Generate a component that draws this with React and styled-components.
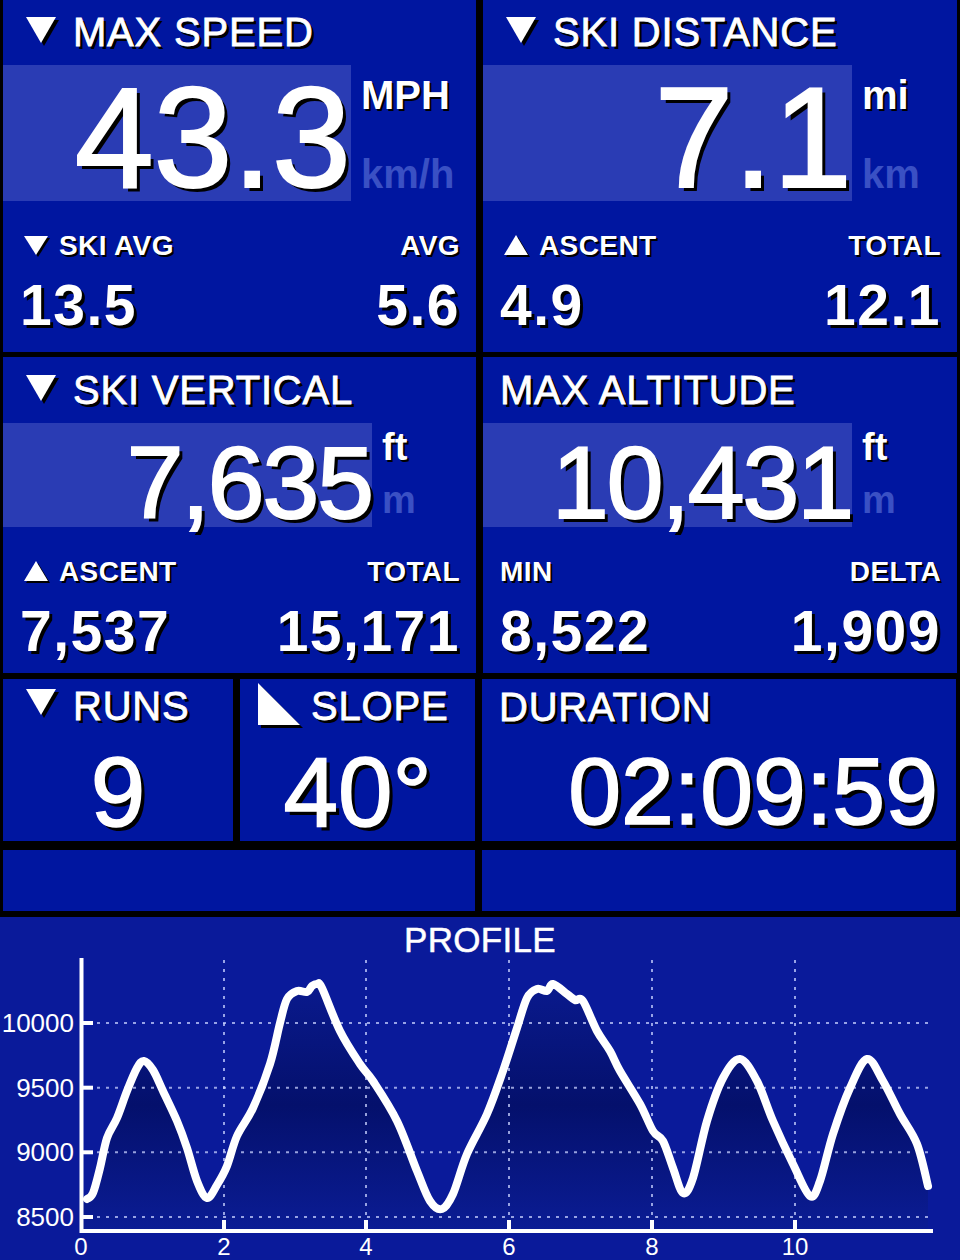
import React from "react";
import styled, { createGlobalStyle } from "styled-components";

const CELL = "#0016a0";
const HILITE = "#2a3cb4";
const DIM = "#3a50c4";
const CHART_BG = "#0a1a9a";

const GlobalStyle = createGlobalStyle`
  html, body {
    margin: 0;
    padding: 0;
    background: #000;
  }
  body {
    font-family: "Liberation Sans", Arial, Helvetica, sans-serif;
    color: #fff;
  }
`;

const Screen = styled.div`
  width: 960px;
  height: 1260px;
  background: #000;
  display: flex;
  flex-direction: column;
  overflow: hidden;
`;

const Row = styled.div`
  display: grid;
  grid-template-columns: ${(p) => p.$cols};
  column-gap: 7px;
  height: ${(p) => p.$h}px;
  margin-top: ${(p) => p.$mt || 0}px;
  padding: 0 3px;
  flex: none;
`;

const Cell = styled.div`
  background: ${CELL};
  display: flex;
  flex-direction: column;
  min-width: 0;
`;

const Title = styled.div`
  display: flex;
  align-items: flex-start;
  gap: ${(p) => p.$gap ?? 17}px;
  margin-top: ${(p) => p.$mt}px;
  padding-left: 17px;
  font-size: 40px;
  line-height: 40px;
  letter-spacing: 0.8px;
  -webkit-text-stroke: 0.8px #fff;
  text-shadow: 3px 3px 0 #000;
  white-space: nowrap;
`;

const Glyph = styled.svg`
  flex: none;
  display: block;
  margin-top: ${(p) => p.$mt || 0}px;
  margin-left: ${(p) => p.$ml || 0}px;
  fill: #fff;
  overflow: visible;
  filter: drop-shadow(${(p) => p.$sh}px ${(p) => p.$sh}px 0 #000);
`;

function Down({ w, h, mt, ml, sh = 3 }) {
  return (
    <Glyph width={w} height={h} viewBox={`0 0 ${w} ${h}`} $mt={mt} $ml={ml} $sh={sh}>
      <polygon points={`0,0 ${w},0 ${w / 2},${h}`} />
    </Glyph>
  );
}

function Up({ w, h, mt, ml, sh = 2 }) {
  return (
    <Glyph width={w} height={h} viewBox={`0 0 ${w} ${h}`} $mt={mt} $ml={ml} $sh={sh}>
      <polygon points={`${w / 2},0 ${w},${h} 0,${h}`} />
    </Glyph>
  );
}

function Slope({ size, mt, ml }) {
  return (
    <Glyph width={size} height={size} viewBox={`0 0 ${size} ${size}`} $mt={mt} $ml={ml} $sh={3}>
      <polygon points={`0,0 ${size},${size} 0,${size}`} />
    </Glyph>
  );
}

const ValueRow = styled.div`
  display: flex;
  height: ${(p) => p.$h}px;
  margin-top: 13px;
  flex: none;
`;

const Hilite = styled.div`
  width: ${(p) => p.$w}px;
  flex: none;
  background: ${HILITE};
  display: flex;
  justify-content: flex-end;
  align-items: flex-start;
`;

const BigNum = styled.span`
  font-size: ${(p) => p.$size}px;
  line-height: 1;
  margin-top: ${(p) => p.$mt}px;
  letter-spacing: ${(p) => p.$ls || 0}px;
  -webkit-text-stroke: 2px #fff;
  text-shadow: 4px 4px 0 #000;
  white-space: nowrap;
`;

const Units = styled.div`
  display: flex;
  flex-direction: column;
  justify-content: space-between;
  padding: ${(p) => p.$pt}px 0 ${(p) => p.$pb}px 10px;
  font-size: ${(p) => p.$size}px;
  line-height: ${(p) => p.$size}px;
  font-weight: 700;
  white-space: nowrap;
`;

const UnitMain = styled.span`
  text-shadow: 2px 2px 0 #000;
`;

const UnitAlt = styled.span`
  color: ${DIM};
`;

const SubLabels = styled.div`
  display: flex;
  justify-content: space-between;
  align-items: flex-start;
  margin-top: 31px;
  padding: 0 16px 0 17px;
  font-size: 28px;
  font-weight: 700;
  line-height: 28px;
  letter-spacing: 0.4px;
  text-shadow: 2px 2px 0 #000;
  white-space: nowrap;
`;

const LabelGroup = styled.span`
  display: flex;
  align-items: flex-start;
  gap: 11px;
`;

const SubValues = styled.div`
  display: flex;
  justify-content: space-between;
  margin-top: 17px;
  padding: 0 16px 0 17px;
  font-size: 57px;
  font-weight: 700;
  line-height: 57px;
  letter-spacing: 1.5px;
  text-shadow: 3px 3px 0 #000;
  white-space: nowrap;
`;

const MidValue = styled.div`
  margin-top: 17px;
  font-size: ${(p) => p.$size}px;
  line-height: 1;
  text-align: ${(p) => p.$align};
  padding-right: ${(p) => p.$pr || 0}px;
  -webkit-text-stroke: 1.6px #fff;
  text-shadow: 4px 4px 0 #000;
  white-space: nowrap;
`;

const ChartPanel = styled.div`
  margin-top: 6px;
  height: 343px;
  flex: none;
  background: ${CHART_BG};
  display: flex;
  flex-direction: column;
  overflow: hidden;
`;

const ChartTitle = styled.div`
  padding-top: 6px;
  font-size: 35px;
  line-height: 34px;
  text-align: center;
  letter-spacing: 0.3px;
  -webkit-text-stroke: 0.5px #fff;
`;

const ChartSvg = styled.svg`
  display: block;
  flex: none;
`;

function StatCell({ title, down = true, value, size, numTop, ls, boxW, boxH, units, unitSize, unitPad, titleTop, left, right }) {
  return (
    <Cell>
      <Title $mt={titleTop}>
        {down && <Down w={30} h={26} mt={5} ml={6} />}
        <span>{title}</span>
      </Title>
      <ValueRow $h={boxH}>
        <Hilite $w={boxW}>
          <BigNum $size={size} $mt={numTop} $ls={ls}>{value}</BigNum>
        </Hilite>
        <Units $size={unitSize} $pt={unitPad[0]} $pb={unitPad[1]}>
          <UnitMain>{units[0]}</UnitMain>
          <UnitAlt>{units[1]}</UnitAlt>
        </Units>
      </ValueRow>
      <SubLabels>
        <LabelGroup>
          {left.icon === "down" && <Down w={24} h={19} mt={4} ml={4} sh={2} />}
          {left.icon === "up" && <Up w={24} h={20} mt={3} ml={4} />}
          <span>{left.label}</span>
        </LabelGroup>
        <span>{right.label}</span>
      </SubLabels>
      <SubValues>
        <span>{left.value}</span>
        <span>{right.value}</span>
      </SubValues>
    </Cell>
  );
}

const PROFILE = [
  [87, 1198], [93, 1192], [100, 1167], [107, 1137], [117, 1117], [127, 1090],
  [137, 1067], [144, 1060], [153, 1069], [163, 1090], [177, 1120], [187, 1147],
  [197, 1180], [207, 1197], [217, 1184], [227, 1165], [237, 1135], [253, 1107],
  [270, 1063], [280, 1022], [287, 998], [297, 990], [307, 991], [312, 985],
  [317, 983], [322, 987], [340, 1030], [360, 1063], [373, 1080], [397, 1120],
  [417, 1170], [430, 1200], [442, 1208], [453, 1193], [467, 1153], [487, 1113],
  [503, 1070], [517, 1027], [527, 997], [537, 988], [547, 990], [553, 983],
  [567, 993], [575, 999], [583, 1000], [597, 1030], [610, 1050], [620, 1070],
  [640, 1103], [653, 1130], [663, 1140], [673, 1167], [683, 1192], [693, 1177],
  [707, 1120], [723, 1077], [740, 1058], [757, 1080], [773, 1120], [793, 1163],
  [810, 1195], [820, 1180], [833, 1133], [850, 1087], [867, 1058], [883, 1080],
  [900, 1113], [917, 1143], [928, 1185],
];

function smoothPath(pts) {
  let d = `M${pts[0][0]},${pts[0][1]}`;
  for (let i = 0; i < pts.length - 1; i++) {
    const p0 = pts[i - 1] || pts[i];
    const p1 = pts[i];
    const p2 = pts[i + 1];
    const p3 = pts[i + 2] || p2;
    const c1x = p1[0] + (p2[0] - p0[0]) / 6;
    const c1y = p1[1] + (p2[1] - p0[1]) / 6;
    const c2x = p2[0] - (p3[0] - p1[0]) / 6;
    const c2y = p2[1] - (p3[1] - p1[1]) / 6;
    d += ` C${c1x.toFixed(1)},${c1y.toFixed(1)} ${c2x.toFixed(1)},${c2y.toFixed(1)} ${p2[0]},${p2[1]}`;
  }
  return d;
}

const Y_TICKS = [
  { v: "10000", y: 1022 },
  { v: "9500", y: 1086.7 },
  { v: "9000", y: 1151.3 },
  { v: "8500", y: 1216 },
];
const X_TICKS = [
  { v: "0", x: 81 },
  { v: "2", x: 224 },
  { v: "4", x: 366 },
  { v: "6", x: 509 },
  { v: "8", x: 652 },
  { v: "10", x: 795 },
];

function ProfileChart() {
  const line = smoothPath(PROFILE);
  const area = `${line} L928,1228 L83,1228 L83,1198 Z`;
  const font = { fontFamily: '"Liberation Sans", Arial, sans-serif', fontSize: 26, fill: "#fff" };
  const xFont = { ...font, fontSize: 24 };
  return (
    <ChartSvg width="960" height="304" viewBox="0 956 960 304">
      <defs>
        <linearGradient id="fillGrad" gradientUnits="userSpaceOnUse" x1="0" y1="980" x2="0" y2="1228">
          <stop offset="0" stopColor="#0a1a8e" />
          <stop offset="0.5" stopColor="#04106c" />
          <stop offset="1" stopColor="#0b1c94" />
        </linearGradient>
      </defs>
      <path d={area} fill="url(#fillGrad)" />
      <g stroke="rgba(200,210,255,0.75)" strokeWidth="2" strokeDasharray="3 6">
        {Y_TICKS.map((t) => (
          <line key={t.v} x1="97" y1={t.y} x2="930" y2={t.y} />
        ))}
        {X_TICKS.slice(1).map((t) => (
          <line key={t.v} x1={t.x} y1="959" x2={t.x} y2="1224" />
        ))}
      </g>
      <path d={line} fill="none" stroke="#fff" strokeWidth="8" strokeLinejoin="round" strokeLinecap="round" />
      <g stroke="#fff" strokeWidth="4">
        <line x1="81.5" y1="957" x2="81.5" y2="1232" />
        <line x1="80" y1="1230" x2="933" y2="1230" />
        {Y_TICKS.map((t) => (
          <line key={t.v} x1="83" y1={t.y} x2="93" y2={t.y} />
        ))}
        {X_TICKS.slice(1).map((t) => (
          <line key={t.v} x1={t.x} y1="1219" x2={t.x} y2="1229" />
        ))}
      </g>
      {Y_TICKS.map((t) => (
        <text key={t.v} x="74" y={t.y + 9} textAnchor="end" style={font}>
          {t.v}
        </text>
      ))}
      {X_TICKS.map((t) => (
        <text key={t.v} x={t.x} y="1254" textAnchor="middle" style={xFont}>
          {t.v}
        </text>
      ))}
    </ChartSvg>
  );
}

export default function App() {
  return (
    <>
      <GlobalStyle />
      <Screen>
        <Row $cols="473px 474px" $h={352}>
          <StatCell
            title="MAX SPEED"
            value="43.3"
            size={142}
            numTop={2}
            boxW={348}
            boxH={136}
            units={["MPH", "km/h"]}
            unitSize={40}
            unitPad={[10, 7]}
            titleTop={12}
            left={{ icon: "down", label: "SKI AVG", value: "13.5" }}
            right={{ label: "AVG", value: "5.6" }}
          />
          <StatCell
            title="SKI DISTANCE"
            value="7.1"
            size={142}
            numTop={2}
            boxW={369}
            boxH={136}
            units={["mi", "km"]}
            unitSize={40}
            unitPad={[10, 7]}
            titleTop={12}
            left={{ icon: "up", label: "ASCENT", value: "4.9" }}
            right={{ label: "TOTAL", value: "12.1" }}
          />
        </Row>
        <Row $cols="473px 474px" $h={316} $mt={5}>
          <StatCell
            title="SKI VERTICAL"
            value="7,635"
            size={102}
            numTop={9}
            ls={-2}
            boxW={369}
            boxH={104}
            units={["ft", "m"]}
            unitSize={38}
            unitPad={[5, 8]}
            titleTop={13}
            left={{ icon: "up", label: "ASCENT", value: "7,537" }}
            right={{ label: "TOTAL", value: "15,171" }}
          />
          <StatCell
            title="MAX ALTITUDE"
            down={false}
            value="10,431"
            size={102}
            numTop={9}
            ls={-2}
            boxW={369}
            boxH={104}
            units={["ft", "m"]}
            unitSize={38}
            unitPad={[5, 8]}
            titleTop={13}
            left={{ label: "MIN", value: "8,522" }}
            right={{ label: "DELTA", value: "1,909" }}
          />
        </Row>
        <Row $cols="230px 235px 474px" $h={162} $mt={6}>
          <Cell>
            <Title $mt={7}>
              <Down w={30} h={26} mt={3} ml={6} />
              <span>RUNS</span>
            </Title>
            <MidValue $size={98} $align="center">9</MidValue>
          </Cell>
          <Cell>
            <Title $mt={7} $gap={11}>
              <Slope size={42} mt={-3} ml={1} />
              <span>SLOPE</span>
            </Title>
            <MidValue $size={98} $align="center">40°</MidValue>
          </Cell>
          <Cell>
            <Title $mt={8}>
              <span>DURATION</span>
            </Title>
            <MidValue $size={95} $align="right" $pr={18}>02:09:59</MidValue>
          </Cell>
        </Row>
        <Row $cols="472px 474px" $h={61} $mt={9}>
          <Cell />
          <Cell />
        </Row>
        <ChartPanel>
          <ChartTitle>PROFILE</ChartTitle>
          <ProfileChart />
        </ChartPanel>
      </Screen>
    </>
  );
}
